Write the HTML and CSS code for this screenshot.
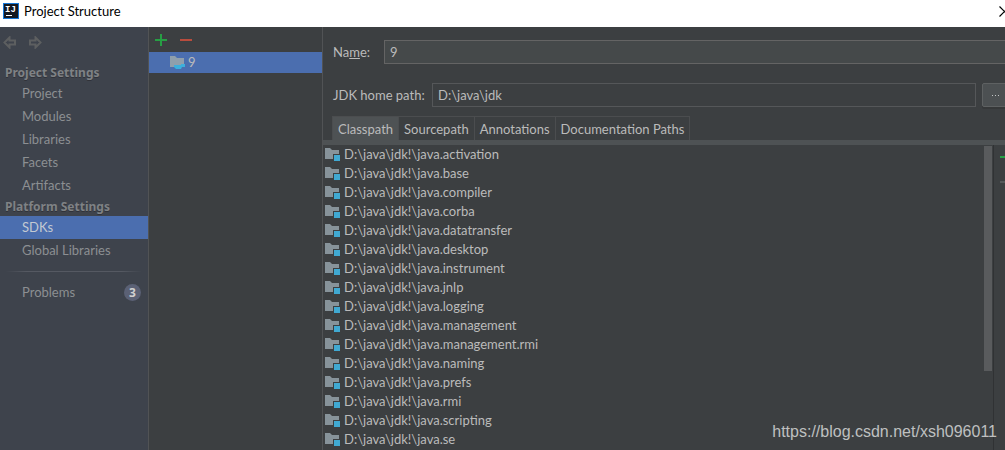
FILE: index.html
```
<!DOCTYPE html>
<html lang="en">
<head>
<meta charset="utf-8">
<title>Project Structure</title>
<link rel="stylesheet" href="styles.css">
</head>
<body>
<svg class="defs" aria-hidden="true">
  <symbol id="folder" viewBox="0 0 16 14"><path fill="#87939a" d="M0 0h5l2 2h7v9H0z"/><path fill="#3c3f41" d="M8 6h8v8H8z"/><path fill="#40a9d2" d="M9 7h6v6H9z"/></symbol>
</svg>
<header class="titlebar">
  <svg class="logo" viewBox="0 0 16 16" aria-hidden="true"><path fill="#1677d8" d="M0 0h16v16H0z"/><path fill="#151922" d="M1 1h14v14H1z"/><text class="logo-text" x="2" y="9">IJ</text><path fill="#fff" d="M3 12h6v1H3z"/></svg>
  <h1 class="title">Project Structure</h1>
  <button class="close" aria-label="Close"><svg width="11" height="11" viewBox="0 0 11 11"><path d="M.5.5l10 10M10.500.5l-10 10" stroke="#000" fill="none" stroke-width="1.2"/></svg></button>
</header>
<main class="window">
  <nav class="sidebar">
    <div class="history">
      <button aria-label="Back"><svg width="13" height="13" viewBox="0 0 13 13"><path d="M6.500 1.500L1.500 6.500l5 5V8.500H12v-4H6.500z"/></svg></button>
      <button aria-label="Forward"><svg width="13" height="13" viewBox="0 0 13 13"><path d="M6.500 1.500l5 5-5 5V8.500H1v-4h5.500z"/></svg></button>
    </div>
    <h2 class="group">Project Settings</h2>
    <a class="item" href="#project">Project</a>
    <a class="item" href="#modules">Modules</a>
    <a class="item" href="#libraries">Libraries</a>
    <a class="item" href="#facets">Facets</a>
    <a class="item" href="#artifacts">Artifacts</a>
    <h2 class="group">Platform Settings</h2>
    <a class="item selected" href="#sdks">SDKs</a>
    <a class="item" href="#global">Global Libraries</a>
    <hr class="rule">
    <a class="item" href="#problems">Problems <span class="badge">3</span></a>
  </nav>
  <section class="sdks">
    <div class="tools">
      <button aria-label="Add"><svg width="12" height="12" viewBox="0 0 12 12"><path fill="#279f44" d="M5 0h2v5h5v2H7v5H5V7H0V5h5z"/></svg></button>
      <button aria-label="Remove"><svg width="12" height="12" viewBox="0 0 12 12"><path fill="#b94c3d" d="M0 5h12v2H0z"/></svg></button>
    </div>
    <a class="sdk" href="#sdk-9"><svg width="16" height="15" viewBox="0 0 16 15"><path fill="#8f9fac" d="M0 1h5l2 2h7v9H0z"/><path fill="#3dafdc" d="M4 10h7v-1h4v3h-3l-1 2H6l-2-2z"/></svg>9</a>
  </section>
  <section class="details">
    <form class="form">
      <div class="field name-field"><label for="name">Na<u>m</u>e:</label><input id="name" value="9"></div>
      <div class="field path-field"><label for="path">JDK home path:</label><input id="path" value="D:\java\jdk"><button type="button" class="browse" aria-label="Browse"><svg width="7" height="1" viewBox="0 0 7 1"><path fill="#c4c6c7" d="M0 0h1v1H0zM3 0h1v1H3zM6 0h1v1H6z"/></svg></button></div>
    </form>
    <div class="tabs" role="tablist">
      <button class="tab active" role="tab" aria-selected="true">Classpath</button><button class="tab" role="tab">Sourcepath</button><button class="tab" role="tab">Annotations</button><button class="tab" role="tab">Documentation Paths</button>
    </div>
    <div class="content">
      <ul class="paths">
        <li><svg class="folder"><use href="#folder"/></svg>D:\java\jdk!\java.activation</li>
        <li><svg class="folder"><use href="#folder"/></svg>D:\java\jdk!\java.base</li>
        <li><svg class="folder"><use href="#folder"/></svg>D:\java\jdk!\java.compiler</li>
        <li><svg class="folder"><use href="#folder"/></svg>D:\java\jdk!\java.corba</li>
        <li><svg class="folder"><use href="#folder"/></svg>D:\java\jdk!\java.datatransfer</li>
        <li><svg class="folder"><use href="#folder"/></svg>D:\java\jdk!\java.desktop</li>
        <li><svg class="folder"><use href="#folder"/></svg>D:\java\jdk!\java.instrument</li>
        <li><svg class="folder"><use href="#folder"/></svg>D:\java\jdk!\java.jnlp</li>
        <li><svg class="folder"><use href="#folder"/></svg>D:\java\jdk!\java.logging</li>
        <li><svg class="folder"><use href="#folder"/></svg>D:\java\jdk!\java.management</li>
        <li><svg class="folder"><use href="#folder"/></svg>D:\java\jdk!\java.management.rmi</li>
        <li><svg class="folder"><use href="#folder"/></svg>D:\java\jdk!\java.naming</li>
        <li><svg class="folder"><use href="#folder"/></svg>D:\java\jdk!\java.prefs</li>
        <li><svg class="folder"><use href="#folder"/></svg>D:\java\jdk!\java.rmi</li>
        <li><svg class="folder"><use href="#folder"/></svg>D:\java\jdk!\java.scripting</li>
        <li><svg class="folder"><use href="#folder"/></svg>D:\java\jdk!\java.se</li>
      </ul>
      <div class="track"><div class="thumb"></div></div>
      <div class="side-tools">
        <button aria-label="Add path"><svg width="12" height="12" viewBox="0 0 12 12"><path fill="#279f44" d="M5 0h2v5h5v2H7v5H5V7H0V5h5z"/></svg></button>
        <button aria-label="Remove path"><svg width="12" height="12" viewBox="0 0 12 12"><path fill="#55585a" d="M0 5h12v2H0z"/></svg></button>
      </div>
    </div>
  </section>
</main>
<div class="watermark">https://blog.csdn.net/xsh096011</div>
</body>
</html>
```
FILE: styles.css
```
* { box-sizing: border-box; }
body {
  margin: 0;
  height: 100vh;
  display: flex;
  flex-direction: column;
  overflow: hidden;
  background: #3c3f41;
  color: #bbbbbb;
  font: 13px/19px Lato, "Noto Sans", sans-serif;
}
h1, h2, ul { margin: 0; padding: 0; font-size: inherit; }
a { color: inherit; text-decoration: none; }
button { font: inherit; color: inherit; background: none; border: 0; padding: 0; }
svg { display: block; flex: none; }
.defs { position: absolute; width: 0; height: 0; }

.titlebar {
  flex: none;
  display: flex;
  align-items: center;
  height: 27px;
  padding: 0 0 5px 3px;
  background: #fff;
  color: #000;
  overflow: hidden;
}
.logo { width: 16px; height: 16px; margin-right: 5px; }
.logo-text { font: bold 9px "Liberation Mono", monospace; fill: #fff; }
.title { flex: 1; font-weight: normal; }
.close { margin-right: -5px; }

.window { flex: 1; min-height: 0; display: flex; }
.sidebar {
  flex: none;
  width: 149px;
  background: #3e434c;
  border-right: 1px solid #515355;
  color: #8c8f92;
}
.history { display: flex; align-items: flex-start; gap: 13px; height: 36px; padding: 9px 3px; }
.history path { fill: none; stroke: #5d5f60; stroke-width: 2; }
.group { padding-left: 5px; color: #7f8285; font: bold 12px/19px "Noto Sans", sans-serif; text-shadow: 0 1px #303239; }
.item { display: flex; align-items: center; justify-content: space-between; height: 23px; padding: 0 7px 0 22px; }
.selected { background: #4b6eaf; color: #c3c9d2; }
.rule { height: 1px; margin: 9px 6px; border: 0; background: linear-gradient(90deg, transparent, #555962 15%, #555962 85%, transparent); }
.badge { width: 17px; height: 17px; border-radius: 9px; background: #5b6175; color: #d0d0d0; font: bold 12px/17px "Noto Sans", sans-serif; text-align: center; }

.sdks { flex: none; width: 174px; border-right: 1px solid #515355; }
.tools { display: flex; gap: 13px; height: 25px; padding: 6px; }
.sdk { display: flex; align-items: center; gap: 2px; height: 21px; padding-left: 21px; background: #4b6eaf; }

.details { flex: 1; min-width: 0; display: flex; flex-direction: column; overflow: hidden; }
.form { padding: 13px 0 9px 10px; }
.field { display: flex; align-items: center; height: 24px; }
.field + .field { margin-top: 19px; }
.field input {
  flex: 1;
  min-width: 0;
  height: 24px;
  padding: 0 5px;
  border: 1px solid #555759;
  background: #3c3f41;
  color: #bbbbbb;
  font: inherit;
}
.name-field label { width: 51px; }
.name-field input { background: #45494a; border-color: #646464; margin-right: -2px; }
.path-field label { width: 99px; white-space: nowrap; }
.browse {
  width: 27px;
  height: 24px;
  margin: 0 -4px 0 6px;
  border: 1px solid #5e6162;
  border-radius: 2px;
  background: #4c5052;
  display: grid;
  place-items: center;
  box-shadow: 0 2px #363839;
}
.tabs { flex: none; display: flex; padding-left: 9px; }
.tab { height: 24px; padding: 2px 5px 0; border: 1px solid #4b4d4f; border-bottom: 0; margin-right: -1px; }
.active { background: #4e5254; }
.content { flex: 1; min-height: 0; display: flex; border-top: 5px solid #4e5254; }
.paths { flex: 1; min-width: 0; padding-left: 2px; list-style: none; overflow: hidden; }
.paths li { display: flex; align-items: center; gap: 3px; height: 19px; }
.folder { width: 16px; height: 14px; }
.track { width: 10px; padding-top: 1px; border-right: 1px solid #303234; }
.thumb { width: 8px; height: 74%; background: #595b5d; }
.side-tools { width: 11px; padding: 6px 0 0 6px; overflow: hidden; display: flex; flex-direction: column; gap: 13px; }
.watermark {
  position: absolute;
  right: 8px;
  bottom: 9px;
  color: #bfc0c0;
  font: 16px/19px "Liberation Sans", Arial, sans-serif;
}
```
